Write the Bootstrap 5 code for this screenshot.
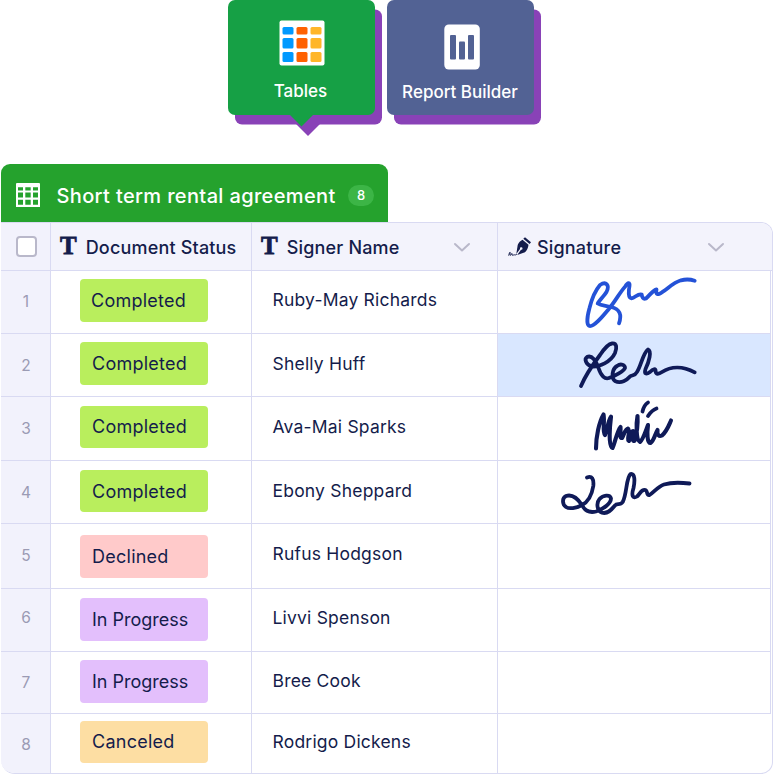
<!DOCTYPE html>
<html lang="en">
<head>
<meta charset="utf-8">
<meta name="viewport" content="width=device-width, initial-scale=1">
<title>Short term rental agreement</title>
<link href="https://cdn.jsdelivr.net/npm/bootstrap@5.3.0/dist/css/bootstrap.min.css" rel="stylesheet">
<style>
body{font-family:Inter,"Liberation Sans",sans-serif;color:#141c4b;width:774px;height:775px;overflow:hidden;background:#fff;line-height:1}
svg{display:block}
.tiles{height:164px;padding-left:228px;gap:12px}
.tile{width:147px;height:115px;border-radius:7px;color:#fff;font-size:17px;font-weight:500;position:relative;box-shadow:7px 9.5px 0 #8942b7}
.tile-tables{background:#16a045;padding-top:20px}
.tile-report{background:#526294;padding-top:24px}
.tile-arrow{position:absolute;left:61px;top:114px}
.tile-tables span{margin-top:17px;margin-right:2px}
.tile-report span{margin-top:14px;margin-right:1px}
.tile-report svg{margin-left:2px}
.sheet-tab{width:387px;height:58px;margin-left:1px;background:#25a22d;border-radius:9px 9px 0 0;color:#fff;padding:4px 14px 0 15px}
.sheet-title{font-size:20px;font-weight:500;margin-left:16.500px;white-space:nowrap;letter-spacing:.36px;padding-top:1px}
.count{width:26px;height:21px;border-radius:11px;background:#3cb546;font-size:13px;font-weight:500;padding-top:1px}
.sheet{width:772px;height:552px;margin-left:1px;border:1px solid #d9daf2;border-left:0;border-radius:0 12px 12px 14px;overflow:hidden}
.line{display:grid;grid-template-columns:50px 201px 246px 273px;width:770px;height:var(--h);border-bottom:1px solid #d9daf2}
.line>div{border-right:1px solid #d9daf2;height:100%}
.line>div:first-child{background:#f2f2fc}
.head-line{--h:48px;width:771px;background:#f3f3fc;font-size:18px;font-weight:500;grid-template-columns:50px 201px 246px 274px}
.head-line>div:last-child{border-right:0}
.head-text{padding-top:2px;margin-left:9px;letter-spacing:.18px;white-space:nowrap}
.sig-text{margin-left:5px}
.head-tee{padding-left:9px}
.chev-name{margin-right:26px}
.chev-sig{margin-right:47px}
.head-sig{padding-left:10px}
.tick{width:21px;height:21px;border:2px solid #b9b8ca;border-radius:4px;background:#fff;margin:0 0 1px 15px}
.tee{font-family:"Liberation Serif",serif;font-weight:700;font-size:25px;-webkit-text-stroke:.8px #141c4b;padding-bottom:2px}
.num{color:#9b9bb4;font-size:15.5px;text-align:center;padding-top:calc(var(--n) - 8px);padding-left:1px}
.pill-cell{padding:var(--p) 0 0 29px}
.pill{width:128px;height:42.5px;border-radius:4px;font-size:18px;padding:2px 0 0 12px;color:#141c4b;letter-spacing:.25px}
.r1 .pill{padding-left:11px}
.r3 .pill,.r5 .pill,.r8 .pill{padding-top:1px}
.who{font-size:17.5px;padding:calc(var(--w) - 9px) 0 0 20.500px;white-space:nowrap;letter-spacing:.2px}
.done{background:#b9ee5d}.declined{background:#ffcaca}.progressing{background:#e3bffc}.progressing.pill{letter-spacing:0}.canceled{background:#fddea3}
.sel{background:#d9e7ff}
.r1{--h:63px;--p:8px;--n:31px;--w:29px}
.r2{--h:63px;--p:8px;--n:32px;--w:30px}
.r3{--h:64px;--p:8.5px;--n:32px;--w:30px}
.r4{--h:63px;--p:8.5px;--n:32px;--w:30px}
.r5{--h:65px;--p:11px;--n:32px;--w:30px}
.r6{--h:63px;--p:9px;--n:29px;--w:29px}
.r7{--h:62px;--p:8px;--n:31px;--w:29px}
.r8{--h:60px;--p:6.5px;--n:31px;--w:28px}
.r8>div:last-child{border-right:0}
.ink{fill:none;stroke:#0f1a58;stroke-width:3.8;stroke-linecap:round;stroke-linejoin:round}
.ink-blue{stroke:#2452d7}
.ink-bold{stroke-width:4.100}
</style>
</head>
<body>
<div class="tiles d-flex align-items-start">
  <div class="tile tile-tables d-flex flex-column align-items-center">
    <svg width="46" height="46" viewBox="0 0 46 46"><rect x=".5" y=".5" width="45" height="45" rx="2" fill="#fff"/><g fill="#0099ff"><rect x="3.500" y="7" width="11" height="7.500" rx="1.500"/><rect x="3.500" y="18" width="11" height="10.500" rx="1.500"/><rect x="3.500" y="32" width="11" height="10" rx="1.500"/></g><g fill="#ff6100"><rect x="17.500" y="7" width="11" height="7.500" rx="1.500"/><rect x="17.500" y="18" width="11" height="10.500" rx="1.500"/><rect x="17.500" y="32" width="11" height="10" rx="1.500"/></g><g fill="#ffb629"><rect x="31.500" y="7" width="11" height="7.500" rx="1.500"/><rect x="31.500" y="18" width="11" height="10.500" rx="1.500"/><rect x="31.500" y="32" width="11" height="10" rx="1.500"/></g></svg>
    <span>Tables</span>
    <svg class="tile-arrow" width="40" height="22" viewBox="0 0 40 22"><path d="M7 10h24L19 22z" fill="#8942b7"/><path d="M0 0h25L12.500 12.500z" fill="#16a045"/></svg>
  </div>
  <div class="tile tile-report d-flex flex-column align-items-center">
    <svg width="36" height="46" viewBox="0 0 36 46"><rect x=".3" y=".5" width="35.500" height="45" rx="4.500" fill="#fff"/><g fill="#526294"><rect x="6" y="11" width="6" height="24.500" rx="1"/><rect x="15" y="17.500" width="6" height="18" rx="1"/><rect x="24" y="11" width="6" height="24.500" rx="1"/></g></svg>
    <span class="text-nowrap">Report Builder</span>
  </div>
</div>
<div class="sheet-tab d-flex align-items-center">
  <svg width="24" height="24" viewBox="0 0 24 24"><path fill="#fff" fill-rule="evenodd" d="M1 0h22a1 1 0 0 1 1 1v23H0V1a1 1 0 0 1 1-1zM2 4.200v3.300h5V4.200zM9.300 4.200v3.300h5.400V4.200zM17 4.200v3.300h5V4.200zM2 9.500v5h5v-5zM9.300 9.500v5h5.400v-5zM17 9.500v5h5v-5zM2 16.800v5h5v-5zM9.300 16.800v5h5.400v-5zM17 16.800v5h5v-5z"/></svg>
  <span class="sheet-title">Short term rental agreement</span>
  <span class="count d-flex align-items-center justify-content-center ms-auto">8</span>
</div>
<div class="sheet">
  <div class="line head-line">
    <div class="d-flex align-items-center"><span class="tick"></span></div>
    <div class="head-tee d-flex align-items-center"><span class="tee">T</span><span class="head-text">Document Status</span></div>
    <div class="head-tee d-flex align-items-center"><span class="tee">T</span><span class="head-text">Signer Name</span><svg class="ms-auto chev-name" width="18" height="10" viewBox="0 0 18 10" fill="none" stroke="#b9b8ca" stroke-width="2" stroke-linecap="round" stroke-linejoin="round"><path d="M2 2l7 6.500L16 2"/></svg></div>
    <div class="head-sig d-flex align-items-center"><svg width="24" height="20" viewBox="0 0 24 20"><path fill="#141c4b" d="M15.300 1.800L17 .2l6 5-1.400 1.900zM14.500 2.700l6 5.100c-.3 3-1.500 5.500-3.500 7.500L9.200 18 13 12.800a1.300 1.300 0 1 0-1-.8l-3.700 5.100L9.700 8c1-2.500 2.700-4.200 4.800-5.300z"/><path d="M.8 18.300c.4-2.500 1.300-3.800 1.400-2.700 0 1-.7 2.700.2 2.700s1-2 1.600-1.800c.5.300-.2 1.900.6 1.900s1-.8 1.700-.6c.8.300 1.500.2 2.200-.3" fill="none" stroke="#141c4b" stroke-width="1" stroke-linecap="round"/></svg><span class="head-text sig-text">Signature</span><svg class="ms-auto chev-sig" width="18" height="10" viewBox="0 0 18 10" fill="none" stroke="#b9b8ca" stroke-width="2" stroke-linecap="round" stroke-linejoin="round"><path d="M2 2l7 6.500L16 2"/></svg></div>
  </div>
  <div class="line r1"><div class="num">1</div><div class="pill-cell"><div class="pill done d-flex align-items-center">Completed</div></div><div class="who">Ruby-May Richards</div><div><svg width="272" height="62" viewBox="498 271 272 62"><path class="ink ink-blue" d="M619 323.300C622 315 620 309 611 307C605 305.500 601 305.500 597.700 303.500C598 302 604 296 606.500 292C610 285 606 281 600 285C594 292 591 302 589.500 308C587 317 586.500 325 589.500 326C594 327 603 316 608 310C615 302 620 292 625 286.700C628 282 630 282 629.500 286C628.500 291 628 298 631.500 298.300C635 298 638 293 641.700 294.500C642 297 643 299.500 646 298.500C650 295 653 290 656.500 289.500C656 292 656 295 659 294C667 290 672 283 681 280.300C686 279 691 279.500 694.700 280.700"/></svg></div></div>
  <div class="line r2"><div class="num">2</div><div class="pill-cell"><div class="pill done d-flex align-items-center">Completed</div></div><div class="who">Shelly Huff</div><div class="sel"><svg width="272" height="62" viewBox="498 334 272 62"><path class="ink" d="M581 386C586 374 594 363 600 355C604 349 608 344 612 343.500C617 343 617 348 615 353C611 362 599 367 592 366.500C586 365 584 359 587 357C592 354.500 596 361 598.500 368C601 376 605 379.500 609 378C615 376 624 371 625 368C625 365 621 363 617 366C612 369 611 378 615 381C621 384 627 380 630 376.500C632 375 635 376 637 372C641 366 643 353 648 349.500C652 351 649 362 645.500 369C644 374 646 375 650 372C653 369 656 368 655.500 371C656 375 659 374 662 372C671 366 683 366 694.700 372.300"/></svg></div></div>
  <div class="line r3"><div class="num">3</div><div class="pill-cell"><div class="pill done d-flex align-items-center">Completed</div></div><div class="who">Ava-Mai Sparks</div><div><svg width="272" height="63" viewBox="498 397 272 63"><path class="ink ink-bold" d="M596 448.500C596 437 599 422 603.500 414.500C605 422 602 432 605 435C607 431 608 421 611 416.700C610 425 608 446 612.500 448C615 443 617 431 620.500 427C621 432 619 438 622 438C624 435 625 429 628 428.500C631 432 626 440 629 441C631 439 630 431 633 431C634 434 631 441 634.500 441C637 433 638 424 637.500 416C636 424 636 440 640 442C643 440 646 430 648 425C647 433 647 443 650.500 443C654 441 655 434 657.500 430C657 435 659 437 662 435.500C667 431 669 425 671 420.500"/><path class="ink" d="M642.500 411.500Q644 405 648 402.500M648 416Q652 410 656.500 408.500"/></svg></div></div>
  <div class="line r4"><div class="num">4</div><div class="pill-cell"><div class="pill done d-flex align-items-center">Completed</div></div><div class="who">Ebony Sheppard</div><div><svg width="272" height="62" viewBox="498 461 272 62"><path class="ink" d="M587 477.500C592 475.500 594 479 593.300 486C592 494 588 502 582 505C576 508.500 569 509 566 507C562 504 562 498 566 496C572 494 578 499 582 505C585 511 590 513 596 511.500C604 509 611 503 611 498.500C610 494 603 495 599.500 499C596 503 597 511 602 512.700C608 514.500 612 509 615 505.500C617 502.500 620 506 622.700 502C627 494 626 478 630.500 474C635 473 635 481 633.500 488C631 496 633 499 637 496.500C640 494 641 489 645.500 490C648 491 646 495.500 649.500 495C654 492 658 486.500 664 484.500C672 482 681 482.500 689.500 483.500"/></svg></div></div>
  <div class="line r5"><div class="num">5</div><div class="pill-cell"><div class="pill declined d-flex align-items-center">Declined</div></div><div class="who">Rufus Hodgson</div><div></div></div>
  <div class="line r6"><div class="num">6</div><div class="pill-cell"><div class="pill progressing d-flex align-items-center">In Progress</div></div><div class="who">Livvi Spenson</div><div></div></div>
  <div class="line r7"><div class="num">7</div><div class="pill-cell"><div class="pill progressing d-flex align-items-center">In Progress</div></div><div class="who">Bree Cook</div><div></div></div>
  <div class="line r8"><div class="num">8</div><div class="pill-cell"><div class="pill canceled d-flex align-items-center">Canceled</div></div><div class="who">Rodrigo Dickens</div><div></div></div>
</div>
<script src="https://cdn.jsdelivr.net/npm/bootstrap@5.3.0/dist/js/bootstrap.bundle.min.js"></script>
</body>
</html>
